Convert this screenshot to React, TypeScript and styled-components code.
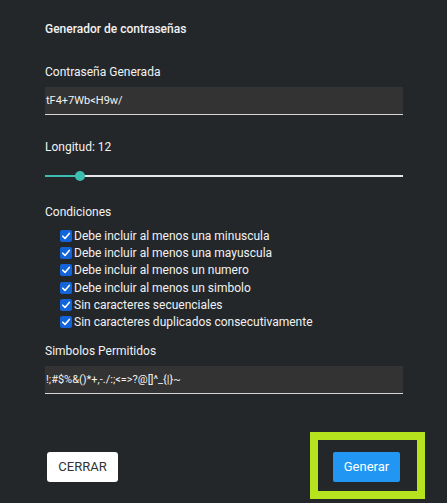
import React from "react";
import styled, { createGlobalStyle } from "styled-components";

const Global = createGlobalStyle`
  html, body {
    margin: 0;
    padding: 0;
    height: 100%;
    background: #23272a;
  }
  body {
    font-family: Roboto, "Noto Sans", sans-serif;
    color: #f2f2f2;
  }
`;

const Dialog = styled.div`
  width: 447px;
  height: 503px;
  box-sizing: border-box;
  padding: 21px 44px 0 45px;
  display: flex;
  flex-direction: column;
`;

const Title = styled.div`
  font-size: 12px;
  font-weight: 500;
  line-height: 16px;
  height: 16px;
`;

const Label = styled.div<{ $top: number }>`
  font-size: 12px;
  line-height: 16px;
  height: 16px;
  margin-top: ${(p) => p.$top}px;
`;

const Field = styled.div`
  margin-top: 7px;
  height: 27px;
  background: #333333;
  border-bottom: 1px solid #d6d6d6;
  display: flex;
  align-items: center;
  padding-left: 1px;
  font-size: 11px;
  color: #f2f2f2;
  white-space: nowrap;
  overflow: hidden;
`;

const SliderWrap = styled.div`
  margin-top: 16px;
  height: 10px;
  position: relative;
  display: flex;
  align-items: center;
`;

const Track = styled.div`
  width: 100%;
  height: 2px;
  background: #e6e6e6;
  position: relative;
`;

const Fill = styled.div`
  position: absolute;
  left: 0;
  top: 0;
  height: 2px;
  background: #3dbdb0;
`;

const Thumb = styled.div`
  position: absolute;
  top: 50%;
  width: 10px;
  height: 10px;
  border-radius: 50%;
  background: #3dbdb0;
  transform: translate(-50%, -50%);
`;

const Checks = styled.div`
  margin-top: 7px;
  padding-left: 15px;
  display: flex;
  flex-direction: column;
`;

const CheckRow = styled.label`
  height: 17.3px;
  display: flex;
  align-items: center;
  gap: 2px;
  font-size: 12px;
  line-height: 16px;
  white-space: nowrap;
`;

const Box = styled.span`
  width: 12px;
  height: 12px;
  border-radius: 2px;
  background: #1264d8;
  display: inline-flex;
  align-items: center;
  justify-content: center;
  flex: none;
`;

const Actions = styled.div`
  margin-top: 58px;
  display: flex;
  justify-content: space-between;
  padding: 0 3px 0 2px;
`;

const CloseButton = styled.button`
  width: 71px;
  height: 30px;
  border: none;
  border-radius: 3px;
  background: #ffffff;
  color: #333333;
  font-family: Roboto, sans-serif;
  font-size: 13px;
  padding: 0;
`;

const Highlight = styled.div`
  position: relative;
  &::after {
    content: "";
    position: absolute;
    left: -23px;
    right: -25px;
    top: -20px;
    bottom: -17px;
    border: 8px solid #b5e31d;
    pointer-events: none;
  }
`;

const PrimaryButton = styled.button`
  width: 67px;
  height: 30px;
  border: none;
  border-radius: 2px;
  background: #2196f3;
  color: #ffffff;
  font-family: Roboto, sans-serif;
  font-size: 13px;
  padding: 0;
  display: block;
`;

const conditions = [
  "Debe incluir al menos una minuscula",
  "Debe incluir al menos una mayuscula",
  "Debe incluir al menos un numero",
  "Debe incluir al menos un simbolo",
  "Sin caracteres secuenciales",
  "Sin caracteres duplicados consecutivamente",
];

const Check = () => (
  <Box>
    <svg width="10" height="10" viewBox="0 0 10 10">
      <path d="M1.8 5.2 L4 7.4 L8.3 2.4" fill="none" stroke="#fff" strokeWidth="1.6" strokeLinecap="round" strokeLinejoin="round" />
    </svg>
  </Box>
);

export default function App() {
  const min = 8;
  const max = 50;
  const value = 12;
  const pct = ((value - min) / (max - min)) * 100 + 0.3;
  return (
    <>
      <Global />
      <Dialog>
        <Title>Generador de contraseñas</Title>
        <Label $top={27}>Contraseña Generada</Label>
        <Field>tF4+7Wb&lt;H9w/</Field>
        <Label $top={24}>Longitud: {value}</Label>
        <SliderWrap>
          <Track>
            <Fill style={{ width: `${pct}%` }} />
            <Thumb style={{ left: `${pct}%` }} />
          </Track>
        </SliderWrap>
        <Label $top={23}>Condiciones</Label>
        <Checks>
          {conditions.map((c) => (
            <CheckRow key={c}>
              <Check />
              {c}
            </CheckRow>
          ))}
        </Checks>
        <Label $top={12}>Simbolos Permitidos</Label>
        <Field>{"!;#$%&()*+,-./:;<=>?@[]^_{|}~"}</Field>
        <Actions>
          <CloseButton>CERRAR</CloseButton>
          <Highlight>
            <PrimaryButton>Generar</PrimaryButton>
          </Highlight>
        </Actions>
      </Dialog>
    </>
  );
}
